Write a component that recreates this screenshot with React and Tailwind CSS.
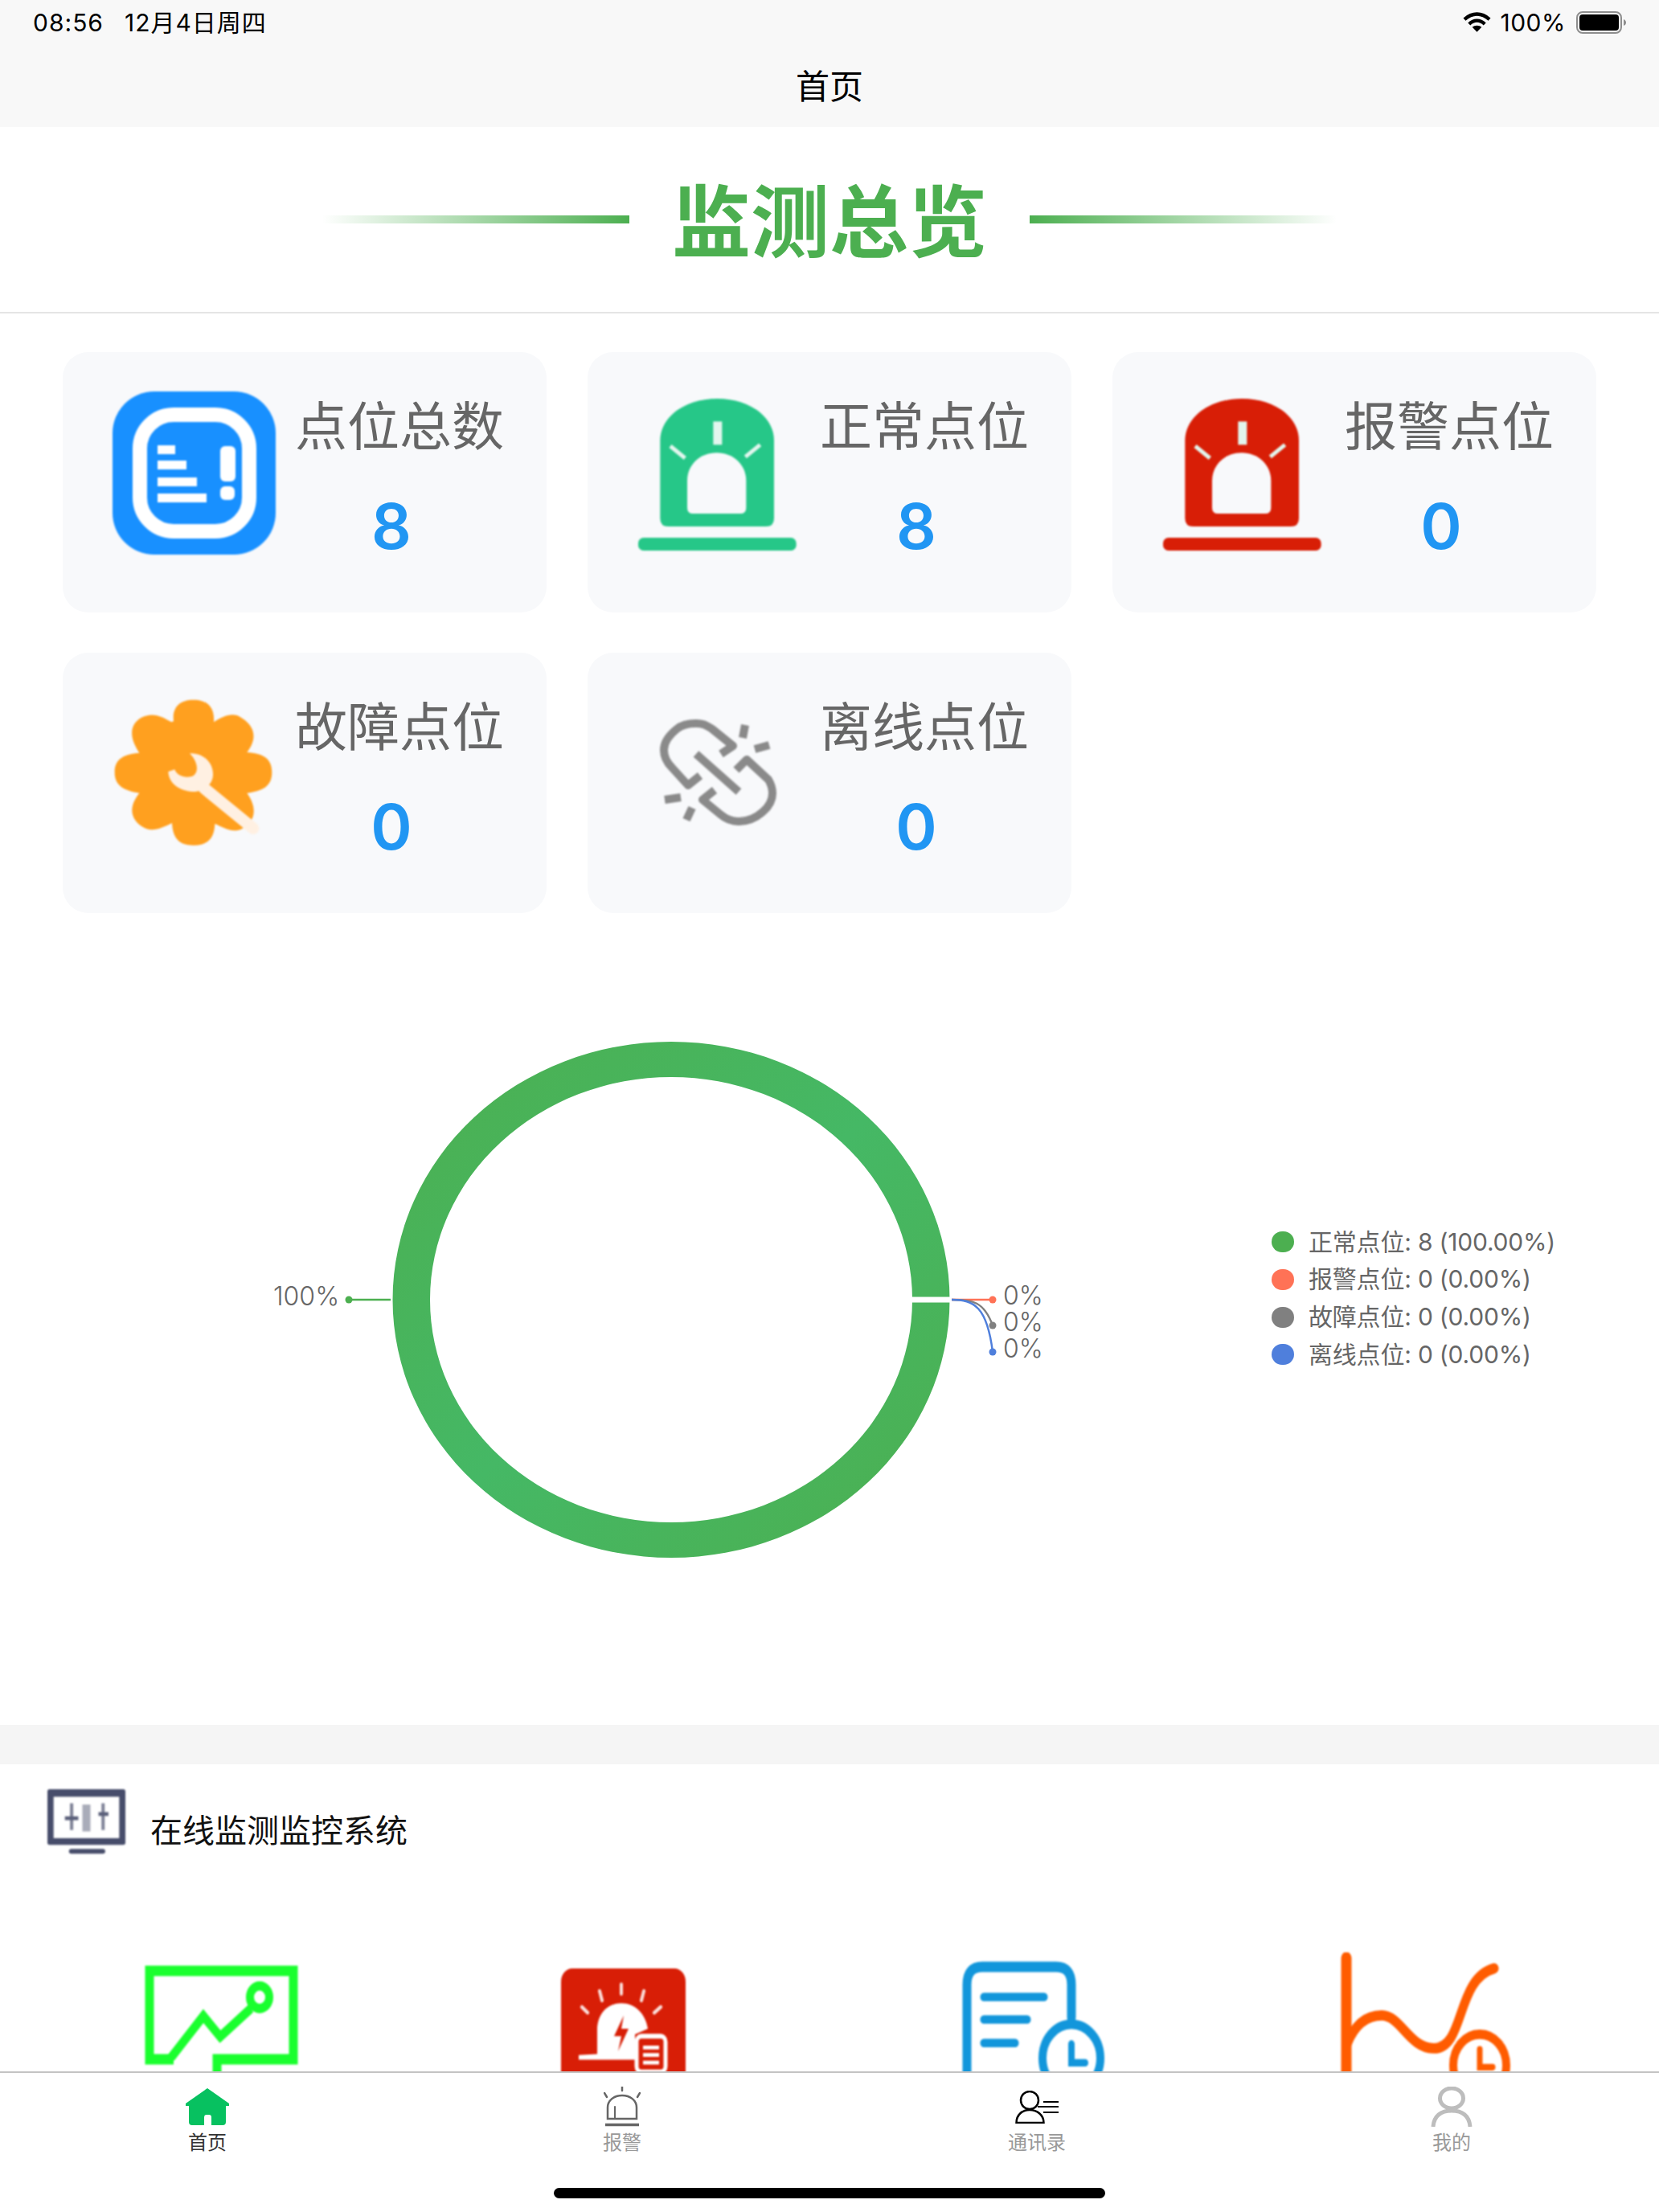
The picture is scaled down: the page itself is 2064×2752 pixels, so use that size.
import React from 'react';

const stats = [
  { label: '点位总数', value: 8, icon: 'total' },
  { label: '正常点位', value: 8, icon: 'normal' },
  { label: '报警点位', value: 0, icon: 'alarm' },
  { label: '故障点位', value: 0, icon: 'fault' },
  { label: '离线点位', value: 0, icon: 'offline' },
];

const legend = [
  { text: '正常点位: 8 (100.00%)', dot: 'bg-[#4caf50]' },
  { text: '报警点位: 0 (0.00%)', dot: 'bg-[#ff7256]' },
  { text: '故障点位: 0 (0.00%)', dot: 'bg-[#808080]' },
  { text: '离线点位: 0 (0.00%)', dot: 'bg-[#4f7fdc]' },
];

function TotalIcon() {
  return (
    <svg viewBox="0 0 203 203" className="w-[203px] h-[203px] blur-[0.8px]">
      <rect x="0" y="0" width="203" height="203" rx="52" fill="#1890ff" />
      <rect x="34" y="29" width="136" height="145" rx="42" fill="none" stroke="#fff" strokeWidth="18" />
      <rect x="56" y="67" width="22" height="11" fill="#fff" />
      <rect x="56" y="86" width="36" height="11" fill="#fff" />
      <rect x="56" y="107" width="49" height="11" fill="#fff" />
      <rect x="56" y="127" width="61" height="11" fill="#fff" />
      <rect x="134" y="68" width="19" height="44" rx="6" fill="#fff" />
      <rect x="134" y="118" width="18" height="17" rx="6" fill="#fff" />
    </svg>
  );
}

// coordinates follow a 3x crop of the icon
function SirenIcon({ color }) {
  return (
    <svg viewBox="12 6 609 609" className="w-[203px] h-[203px] blur-[0.8px]">
      <path d="M97 190 C97 100 190 33 310 33 C430 33 522 100 522 190 V480 Q522 510 492 510 H127 Q97 510 97 480 Z" fill={color} />
      <path d="M198 340 C198 280 245 235 308 235 C370 235 418 280 418 340 V440 Q418 462 396 462 H220 Q198 462 198 440 Z" fill="#f8f9fb" />
      <rect x="295" y="118" width="33" height="87" fill="#e2f6ee" />
      <path d="M135 210 L190 255 M470 205 L415 250" stroke="#e2f6ee" strokeWidth="15" />
      <rect x="15" y="552" width="590" height="48" rx="20" fill={color} />
    </svg>
  );
}

function FaultIcon() {
  return (
    <svg viewBox="30 3 609 609" className="w-[203px] h-[203px] blur-[0.8px]">
      <path
        fill="#ffa01f"
        d="M258 112 C252 60 280 32 332 32 C384 32 412 60 408 115 C440 95 475 78 505 95 C550 120 580 165 532 228 C590 232 625 250 625 302 C625 355 590 372 532 380 C575 440 560 490 510 515 C470 530 440 505 412 495 C410 550 385 575 332 575 C280 575 255 550 252 492 C215 510 175 530 140 505 C95 475 90 430 130 380 C75 370 38 355 38 302 C38 250 75 235 130 230 C90 170 95 125 135 100 C180 75 215 95 250 115 Z"
      />
      <path
        fill="#fff0e2"
        d="M318 232 C365 228 408 265 405 315 C402 350 370 375 330 375 C280 372 240 345 238 300 L262 292 C270 315 300 325 325 318 C350 310 355 270 318 232 Z"
      />
      <path d="M372 362 L555 512" stroke="#fff0e2" strokeWidth="44" strokeLinecap="round" />
    </svg>
  );
}

function OfflineIcon() {
  return (
    <svg viewBox="0 0 203 203" className="w-[203px] h-[203px] blur-[0.8px]" fill="none" stroke="#8a8a8a" strokeWidth="10" strokeLinejoin="round">
      <path d="M104 77 L119 67 L93 46 C84 40 80 39 73 39 C63 39 55 41 49 46 C39 54 33 62 33 72 C33 82 37 88 43 94 L63 116 L78 104" />
      <path d="M73 77 L126 124" />
      <path d="M123 97 L136 84 L163 109 C166 114 168 120 168 126 C168 136 163 143 156 149 C147 157 137 161 126 161 C117 161 110 158 103 152 L81 134 L96 122" />
      <path d="M134 41 L131 57 M164 66 L146 71 M34 134 L54 131 M68 144 L61 159" />
    </svg>
  );
}

const statIcons = {
  total: <TotalIcon />,
  normal: <SirenIcon color="#26c788" />,
  alarm: <SirenIcon color="#d81e06" />,
  fault: <FaultIcon />,
  offline: <OfflineIcon />,
};

function StatCard({ label, value, icon }) {
  return (
    <div className="h-[324px] rounded-[32px] bg-[#f8f9fb] flex pl-[62px] pt-[49px]">
      <div className="w-[203px] h-[203px] shrink-0">{statIcons[icon]}</div>
      <div className="ml-[24px] flex flex-col">
        <div className="text-[65px] leading-[66px] mt-[11px] text-[#666] whitespace-nowrap">{label}</div>
        <div className="w-[240px] text-center text-[78px] leading-[80px] mt-[51px] font-semibold text-[#2196f3]">{value}</div>
      </div>
    </div>
  );
}

function DonutChart() {
  return (
    <svg viewBox="0 0 1540 1010" className="w-[1540px] h-[1010px] shrink-0">
      <defs>
        <linearGradient id="ringGrad" x1="0" y1="0" x2="1" y2="1">
          <stop offset="0" stopColor="#4caf50" />
          <stop offset="0.5" stopColor="#45b865" />
          <stop offset="1" stopColor="#4caf50" />
        </linearGradient>
      </defs>
      <path
        fillRule="evenodd"
        fill="url(#ringGrad)"
        d="M488.5 481 a346.5 321 0 1 0 693 0 a346.5 321 0 1 0 -693 0 Z M535 481 a300 277 0 1 0 600 0 a300 277 0 1 0 -600 0 Z"
      />
      <rect x="1130" y="477.5" width="56" height="7" fill="#fff" />

      <path d="M434 481 H486" stroke="#4caf50" strokeWidth="2.5" />
      <circle cx="434" cy="481" r="4.5" fill="#4caf50" />
      <path d="M1184 481 H1235" stroke="#ff7256" strokeWidth="2.5" />
      <circle cx="1235" cy="481" r="4.5" fill="#ff7256" />
      <path d="M1184 481 C1210 481 1224 483 1235 513" fill="none" stroke="#808080" strokeWidth="2.5" />
      <circle cx="1235" cy="513" r="4.5" fill="#808080" />
      <path d="M1184 481 C1212 481 1228 490 1235 546" fill="none" stroke="#4f7fdc" strokeWidth="2.5" />
      <circle cx="1235" cy="546" r="4.5" fill="#4f7fdc" />

      <g className="text-[32px] font-light fill-[#666]">
        <text x="340" y="488">100%</text>
        <text x="1248" y="487">0%</text>
        <text x="1248" y="520">0%</text>
        <text x="1248" y="553">0%</text>
      </g>
    </svg>
  );
}

function MonitorIcon() {
  return (
    <svg viewBox="55 48 290 245" className="w-[97px] h-[82px] blur-[1px]">
      <rect x="55" y="48" width="290" height="207" rx="8" fill="#474d6b" />
      <rect x="78" y="76" width="244" height="154" fill="#fff" />
      <rect x="135" y="270" width="135" height="18" rx="9" fill="#474d6b" />
      <path d="M145 100 V200 M262 100 V200" stroke="#7d8196" strokeWidth="12" />
      <path d="M120 156 H170 M245 140 H282" stroke="#5b607a" strokeWidth="14" />
      <path d="M200 105 V205" stroke="#a9acb9" strokeWidth="30" />
    </svg>
  );
}

function ChartTile() {
  return (
    <svg viewBox="0 0 191 135" preserveAspectRatio="none" className="w-[191px] h-[158px] blur-[1px]" fill="none" stroke="#1aff2e" strokeWidth="11">
      <path d="M36 100 H6 V6 H185 V100 H90 V135" />
      <path d="M33 98 L73 54 L94 76 L132 46" strokeWidth="10" />
      <ellipse cx="143" cy="34" rx="12" ry="12" strokeWidth="10" />
    </svg>
  );
}

function AlarmTile() {
  return (
    <svg viewBox="0 0 155 135" preserveAspectRatio="none" className="w-[155px] h-[158px] blur-[1px]">
      <rect x="0" y="0" width="155" height="140" rx="14" fill="#d81e06" />
      <path d="M75 17 V27 M48 24 L51 34 M103 24 L100 34 M26 41 L33 47 M124 41 L116 47" stroke="#fbe0dc" strokeWidth="4" strokeLinecap="round" />
      <path d="M45 91 V66 C45 48 58 37 75 37 C92 37 105 48 108 64 L92 70 V97 H22 V92 Z" fill="#fff" />
      <path d="M78 50 L66 72 H75 L71 88 L84 64 H75 Z" fill="#d81e06" />
      <rect x="94" y="72" width="36" height="38" rx="6" fill="#d81e06" stroke="#fff" strokeWidth="5" />
      <path d="M102 84 H122 M102 92 H122 M102 100 H122" stroke="#fff" strokeWidth="4" />
    </svg>
  );
}

function ReportTile() {
  return (
    <svg viewBox="0 0 178 135" preserveAspectRatio="none" className="w-[178px] h-[158px] blur-[1px]" fill="none" stroke="#1296db" strokeLinecap="round">
      <path d="M6 140 V25 Q6 6 25 6 H117 Q136 6 136 25 V60" strokeWidth="11" />
      <path d="M27 38 H102 M27 62 H81 M27 87 H66" strokeWidth="9" />
      <circle cx="136" cy="103" r="36" strokeWidth="10" />
      <path d="M136 88 V108 H153" strokeWidth="8" />
    </svg>
  );
}

function TrendTile() {
  return (
    <svg viewBox="0 0 216 135" preserveAspectRatio="none" className="w-[216px] h-[158px] blur-[1px]" fill="none" stroke="#ff5c00" strokeLinecap="round">
      <path d="M10 6 V140" strokeWidth="13" />
      <path d="M10 100 C20 76 36 67 54 67 C78 67 88 102 119 102 C158 102 146 28 194 17" strokeWidth="11" />
      <circle cx="176" cy="120" r="33" strokeWidth="10" />
      <path d="M176 103 V122 H192" strokeWidth="7" />
    </svg>
  );
}

function HomeTab() {
  return (
    <svg viewBox="0 0 54 46" className="w-[54px] h-[46px]">
      <path d="M27 0 L54 19 V22 H50 V42 Q50 46 46 46 H32 V36 Q32 33 29 33 H26 Q23 33 23 36 V46 H8 Q4 46 4 42 V22 H0 V19 Z" fill="#07c160" />
    </svg>
  );
}

function AlarmTab() {
  return (
    <svg viewBox="0 0 46 50" className="w-[46px] h-[50px]" fill="none" stroke="#666" strokeLinecap="round">
      <path d="M5 40 V26 C5 17 13 11 23 11 C33 11 41 17 41 26 V40 Z" strokeWidth="2.5" />
      <path d="M14 39 V25" strokeWidth="2" />
      <path d="M2 47.5 H44" strokeWidth="3.5" strokeLinecap="butt" />
      <path d="M23 0 V5 M1 8 L4 13 M45 8 L42 13" strokeWidth="2.5" />
    </svg>
  );
}

function ContactTab() {
  return (
    <svg viewBox="0 0 54 41" className="w-[54px] h-[41px]" fill="none" stroke="#000" strokeWidth="2.5">
      <ellipse cx="18" cy="12" rx="11" ry="11" />
      <path d="M1.5 40 C1.5 30 9 24 18 24 C27 24 35.5 30 35.5 40 Z" />
      <path d="M35 14 H54 M28 20 H54 M35 27 H54" strokeWidth="2" />
    </svg>
  );
}

function UserTab() {
  return (
    <svg viewBox="0 0 52 50" className="w-[52px] h-[50px]" fill="none" stroke="#bdbdbd" strokeWidth="5">
      <ellipse cx="26" cy="14.5" rx="14.5" ry="12.5" />
      <path d="M3 50 C4 36 13 30 26 30 C39 30 48 36 49 50" />
    </svg>
  );
}

const tabs = [
  { label: '首页', icon: <HomeTab />, text: 'text-[#333]' },
  { label: '报警', icon: <AlarmTab />, text: 'text-[#999]' },
  { label: '通讯录', icon: <ContactTab />, text: 'text-[#999]' },
  { label: '我的', icon: <UserTab />, text: 'text-[#999]' },
];

function StatusBar() {
  return (
    <div className="h-[56px] px-[41px] flex items-center justify-between text-[30px] text-black">
      <div className="flex gap-[26px] tracking-[1px]">
        <span>08:56</span>
        <span>12月4日周四</span>
      </div>
      <div className="flex items-center">
        <svg viewBox="0 0 36 26" className="w-[35px] h-[26px]">
          <path d="M2 9 C12 0 24 0 34 9 M8 15 C14 9 22 9 28 15" fill="none" stroke="#000" strokeWidth="4.5" />
          <path d="M18 25 L12 19 C15 16 21 16 24 19 Z" fill="#000" />
        </svg>
        <span className="ml-[11px] mr-[13px] tracking-[0.5px]">100%</span>
        <svg viewBox="0 0 62 28" className="w-[62px] h-[28px]">
          <rect x="1" y="1" width="55" height="26" rx="7" fill="none" stroke="#8e8e8e" strokeWidth="2" />
          <rect x="4" y="4" width="49" height="20" rx="4" fill="#000" />
          <path d="M59 10 C61 11 62 12 62 14 C62 16 61 17 59 18 Z" fill="#8e8e8e" />
        </svg>
      </div>
    </div>
  );
}

export default function App() {
  return (
    <div className="w-[2064px] h-[2752px] flex flex-col overflow-hidden bg-white font-['Inter','Noto_Sans_CJK_SC',sans-serif]">
      <header className="h-[158px] shrink-0 bg-[#f8f8f8]">
        <StatusBar />
        <div className="text-center text-[42px] leading-[50px] mt-[27px] text-black">首页</div>
      </header>

      <main className="flex-1 min-h-0 overflow-hidden">
        {/* title */}
        <div className="h-[232px] border-b-2 border-[#e5e5e5] flex items-center justify-center">
          <div className="w-[382px] h-[10px] bg-linear-to-r from-transparent to-[#4caf50]" />
          <h1 className="mx-[53px] pb-[8px] text-[98px] leading-[110px] font-bold text-[#4caf50] font-['Noto_Sans_CJK_SC',sans-serif]">监测总览</h1>
          <div className="w-[382px] h-[10px] bg-linear-to-l from-transparent to-[#4caf50]" />
        </div>

        {/* stat cards */}
        <div className="grid grid-cols-3 gap-x-[51px] gap-y-[50px] px-[78px] pt-[48px]">
          {stats.map((s) => (
            <StatCard key={s.label} {...s} />
          ))}
        </div>

        {/* chart + legend */}
        <section className="h-[1010px] flex items-start">
          <DonutChart />
          <ul className="mt-[386px] ml-[42px] flex flex-col">
            {legend.map((l) => (
              <li key={l.text} className="h-[46.67px] flex items-center whitespace-nowrap text-[30px] font-normal tracking-[-0.2px] text-[#666]">
                <span className={`w-[28px] h-[26px] rounded-full mr-[18px] ${l.dot}`} />
                {l.text}
              </li>
            ))}
          </ul>
        </section>

        <div className="h-[49px] bg-[#f5f5f5]" />

        {/* system row */}
        <div className="flex items-start pl-[59px] pt-[31px]">
          <MonitorIcon />
          <div className="ml-[31px] mt-[28px] text-[40px] leading-[48px] text-[#111]">在线监测监控系统</div>
        </div>

        {/* clipped by the tab bar */}
        <div className="grid grid-cols-4 mt-[121px]">
          <div className="pl-[180px] pt-[16px]"><ChartTile /></div>
          <div className="pl-[182px] pt-[20px]"><AlarmTile /></div>
          <div className="pl-[165px] pt-[11px]"><ReportTile /></div>
          <div className="pl-[117px]"><TrendTile /></div>
        </div>
      </main>

      <nav className="h-[175px] shrink-0 border-t-2 border-[#c4c4c4] bg-white">
        <div className="grid grid-cols-4 pt-[17px]">
          {tabs.map((t) => (
            <div key={t.label} className="flex flex-col items-center">
              <div className="h-[50px] flex items-center">{t.icon}</div>
              <span className={`mt-[5px] text-[24px] leading-[30px] ${t.text}`}>{t.label}</span>
            </div>
          ))}
        </div>
        <div className="mt-[41px] mx-auto w-[686px] h-[13px] rounded-full bg-black" />
      </nav>
    </div>
  );
}
